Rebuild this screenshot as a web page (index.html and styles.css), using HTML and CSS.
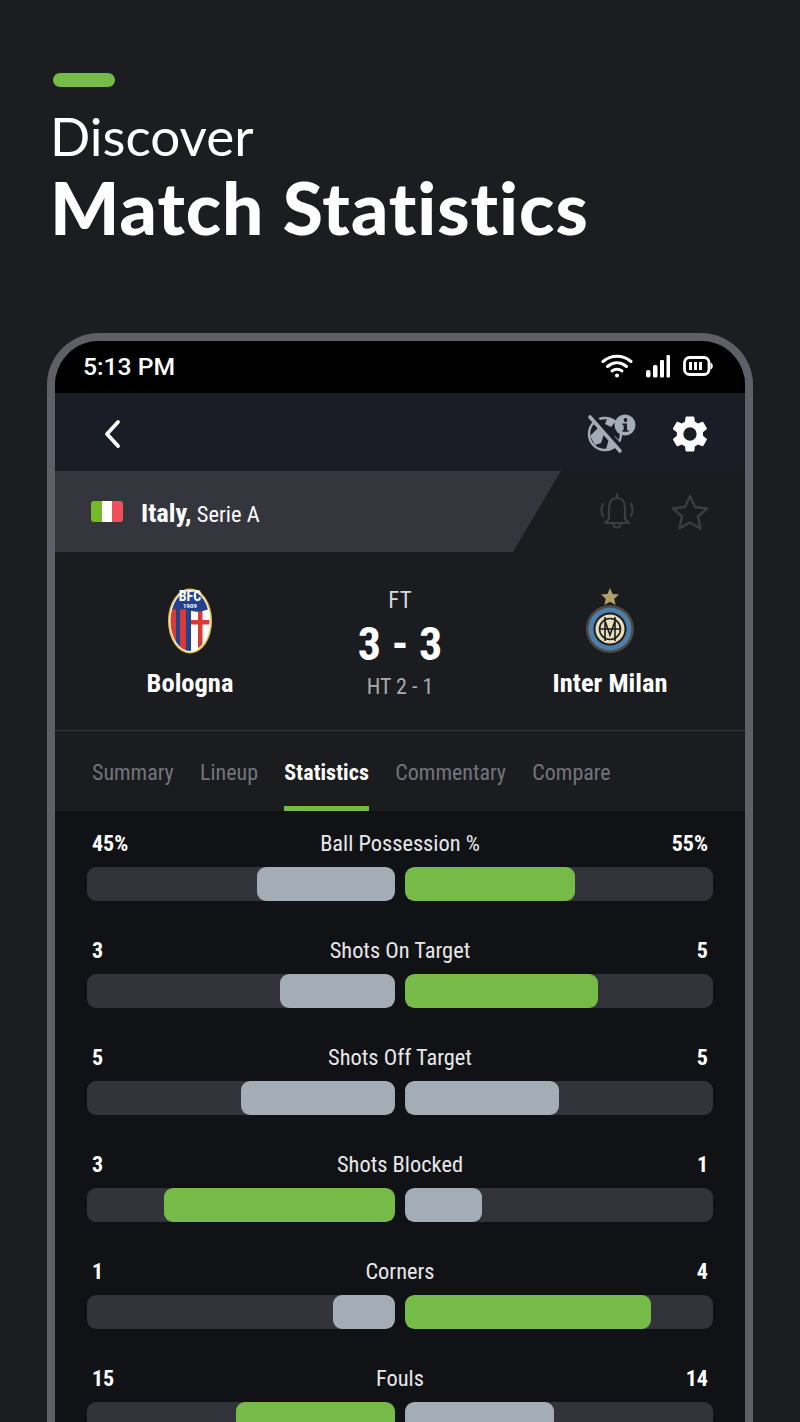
FILE: index.html
```html
<!DOCTYPE html>
<html lang="en">
<head>
<meta charset="utf-8">
<title>Match Statistics</title>
<link rel="stylesheet" href="styles.css">
</head>
<body>
<header class="hero">
  <div class="pill"></div>
  <h1 class="title"><span class="t-light">Discover</span><span class="t-bold">Match Statistics</span></h1>
</header>
<main class="phone">
  <div class="status">
    <span class="time">5:13 PM</span>
    <div class="status-icons">
      <svg width="32" height="26" viewBox="0 0 32 26" fill="none" stroke="#fff" stroke-width="3" stroke-linecap="round"><path d="M2 8.500C10 1.500 22 1.500 30 8.500"/><path d="M6.500 13.500C12.500 8.500 19.500 8.500 25.500 13.500"/><path d="M11 18C14.500 15.500 17.500 15.500 21 18"/><circle cx="16" cy="22.500" r="2" fill="#fff" stroke="none"/></svg>
      <svg width="26" height="26" viewBox="0 0 26 26" fill="#fff"><rect x="1" y="17" width="4.500" height="7.500" rx="2"/><rect x="8" y="12" width="4.500" height="12.500" rx="1.500"/><rect x="15" y="7" width="4" height="17.500" rx="1"/><rect x="21.500" y="2" width="3.500" height="22.500" rx="1"/></svg>
      <svg width="30" height="22" viewBox="0 0 30 22" fill="none"><rect x="1.500" y="2.500" width="24.500" height="17" rx="5" stroke="#fff" stroke-width="2.800"/><path d="M27.500 7.500v7c1.500-.5 2.300-2 2.300-3.500s-.8-3-2.300-3.500z" fill="#fff"/><path d="M7.500 7v8M12.500 7v8M17.500 7v8" stroke="#fff" stroke-width="3"/></svg>
    </div>
  </div>
  <div class="appbar">
    <svg class="back" width="20" height="32" viewBox="0 0 20 32" fill="none" stroke="#fff" stroke-width="3.800" stroke-linecap="round" stroke-linejoin="round"><path d="M16 4L5 16l11 12"/></svg>
    <div class="app-actions">
      <svg width="52" height="42" viewBox="0 0 52 42"><circle cx="20" cy="22" r="16" fill="none" stroke="#a4adb6" stroke-width="2.400"/><path d="M5 24l8-8 6 6-3 9-6 2zM21 37l3-10 6-3 4 4-5 8zM22 7l9 2-5 6-6-3z" fill="#a4adb6"/><path d="M7 4l30 34" stroke="#1a1d26" stroke-width="7"/><path d="M5 5l30 34" stroke="#a4adb6" stroke-width="3.600" stroke-linecap="round"/><circle cx="40" cy="13" r="10.500" fill="#a4adb6"/><circle cx="40.500" cy="8" r="1.900" fill="#1a1d26"/><path d="M37.500 11.500h4.500v6.500h1.500v1.800h-6V18h1.200v-4.700h-1.200z" fill="#1a1d26"/></svg>
      <svg width="42" height="42" viewBox="0 0 24 24" fill="#fff"><path fill-rule="evenodd" d="M19.400 13c.04-.32.07-.65.07-1s-.03-.68-.07-1l2.100-1.650c.2-.15.25-.43.12-.66l-2-3.460c-.12-.22-.4-.3-.61-.22l-2.490 1c-.52-.4-1.080-.73-1.690-.98l-.38-2.650A.49.49 0 0 0 13.970 2h-4a.49.49 0 0 0-.49.42L9.100 5.070c-.61.25-1.170.59-1.690.98l-2.490-1c-.23-.09-.49 0-.61.22l-2 3.460c-.13.22-.07.5.12.66L4.540 11c-.04.32-.07.66-.07 1s.03.68.07 1l-2.110 1.650c-.19.15-.25.430-.12.660l2 3.460c.12.220.39.300.61.220l2.490-1c.52.400 1.080.730 1.690.980l.38 2.650c.03.240.240.420.490.420h4c.250 0 .460-.180.490-.420l.38-2.650c.610-.250 1.170-.590 1.690-.980l2.490 1c.230.090.490 0 .610-.220l2-3.460c.120-.220.070-.500-.120-.660zM12 15.800a3.800 3.800 0 1 1 0-7.600 3.800 3.800 0 0 1 0 7.600z"/></svg>
    </div>
  </div>
  <div class="league">
    <div class="league-tag">
      <span class="flag"><i class="fg"></i><i class="fw"></i><i class="fr"></i></span>
      <span class="league-name"><b>Italy,</b> Serie A</span>
    </div>
    <div class="league-actions">
      <svg width="38" height="40" viewBox="0 0 38 40" fill="none" stroke="#3c3d43" stroke-width="2.200" stroke-linecap="round" stroke-linejoin="round"><path d="M19 2v4M11 27V16c0-6 3-10 8-10s8 4 8 10v11l4 4H7z"/><path d="M15 31c0 6 8 6 8 0M5 12c-2 4-2 8 0 12M33 12c2 4 2 8 0 12"/></svg>
      <svg width="38" height="38" viewBox="0 0 38 38" fill="none" stroke="#3c3d43" stroke-width="2.400" stroke-linejoin="round"><path d="M19 3l5 11 12 1.500-9 8 2.500 12L19 29.500 8.500 35.500 11 23.500l-9-8L14 14z"/></svg>
    </div>
  </div>
  <section class="match">
    <div class="team">
      <svg class="crest" width="46" height="68" viewBox="0 0 46 68">
        <defs><clipPath id="oval"><ellipse cx="23" cy="34" rx="19.500" ry="30"/></clipPath></defs>
        <ellipse cx="23" cy="34" rx="22" ry="32.500" fill="#e8c04a"/>
        <ellipse cx="23" cy="34" rx="20.500" ry="31" fill="#fff"/>
        <g clip-path="url(#oval)">
          <rect x="0" y="0" width="46" height="68" fill="#fff"/>
          <rect x="3" y="22" width="6" height="44" fill="#d63c33"/><rect x="9" y="22" width="4" height="44" fill="#24418e"/>
          <rect x="13" y="22" width="6" height="44" fill="#d63c33"/><rect x="19" y="22" width="5" height="44" fill="#24418e"/>
          <rect x="31" y="18" width="4.500" height="48" fill="#d63c33"/><rect x="24" y="33" width="22" height="4.500" fill="#d63c33"/>
          <path d="M0 0h46v20c-6 3-14 6-21 4-8-2-16-3-25-1z" fill="#24418e"/>
        </g>
        <text x="23" y="14" class="crest-a">BFC</text>
        <text x="23" y="21" class="crest-b">1909</text>
      </svg>
      <span class="team-name">Bologna</span>
    </div>
    <div class="score">
      <span class="ft">FT</span>
      <span class="result">3 - 3</span>
      <span class="ht">HT 2 - 1</span>
    </div>
    <div class="team">
      <svg class="crest" width="52" height="68" viewBox="0 0 52 68">
        <path d="M26 1l2.600 6 6.400.6-4.800 4.200 1.400 6.300L26 14.800l-5.600 3.300 1.400-6.300L17 7.600l6.400-.6z" fill="#b2a06a"/>
        <circle cx="26" cy="42" r="24" fill="#4b4a44"/>
        <circle cx="26" cy="42" r="21.500" fill="#4f7ea8"/>
        <circle cx="26" cy="42" r="16.500" fill="#1b1c20"/>
        <circle cx="26" cy="42" r="14.500" fill="#e9dfbb"/>
        <g fill="none" stroke="#1b1c20" stroke-width="1.600"><circle cx="26" cy="42" r="10.500"/><path d="M21 30v24M31 30v24M21 34l5 14 5-14M16 42h20"/></g>
      </svg>
      <span class="team-name">Inter Milan</span>
    </div>
  </section>
  <nav class="tabs">
    <span class="tab">Summary</span>
    <span class="tab">Lineup</span>
    <span class="tab active">Statistics</span>
    <span class="tab">Commentary</span>
    <span class="tab">Compare</span>
  </nav>
  <section class="stats">
    <div class="stat">
      <div class="stat-head"><b>45%</b><span>Ball Possession %</span><b>55%</b></div>
      <div class="bars"><div class="track left"><div class="fill grey" style="width:44.8%"></div></div><div class="track"><div class="fill green" style="width:55.2%"></div></div></div>
    </div>
    <div class="stat">
      <div class="stat-head"><b>3</b><span>Shots On Target</span><b>5</b></div>
      <div class="bars"><div class="track left"><div class="fill grey" style="width:37.5%"></div></div><div class="track"><div class="fill green" style="width:62.500%"></div></div></div>
    </div>
    <div class="stat">
      <div class="stat-head"><b>5</b><span>Shots Off Target</span><b>5</b></div>
      <div class="bars"><div class="track left"><div class="fill grey" style="width:50%"></div></div><div class="track"><div class="fill grey" style="width:50%"></div></div></div>
    </div>
    <div class="stat">
      <div class="stat-head"><b>3</b><span>Shots Blocked</span><b>1</b></div>
      <div class="bars"><div class="track left"><div class="fill green" style="width:75%"></div></div><div class="track"><div class="fill grey" style="width:25%"></div></div></div>
    </div>
    <div class="stat">
      <div class="stat-head"><b>1</b><span>Corners</span><b>4</b></div>
      <div class="bars"><div class="track left"><div class="fill grey" style="width:20%"></div></div><div class="track"><div class="fill green" style="width:80%"></div></div></div>
    </div>
    <div class="stat">
      <div class="stat-head"><b>15</b><span>Fouls</span><b>14</b></div>
      <div class="bars"><div class="track left"><div class="fill green" style="width:51.700%"></div></div><div class="track"><div class="fill grey" style="width:48.300%"></div></div></div>
    </div>
  </section>
</main>
</body>
</html>
```
FILE: styles.css
```css
* { box-sizing: border-box; }
html, body { margin: 0; height: 1422px; overflow: hidden; }
body { background: #1c1d21; font-family: "Roboto Condensed", "Roboto", sans-serif; font-stretch: 75%; color: #fff; }

.hero { padding: 73px 0 0 53px; height: 333px; }
.pill { width: 62px; height: 14px; border-radius: 7px; background: #76bb47; }
.title { margin: 17px 0 0 -3px; font-family: "Lato", sans-serif; font-stretch: normal; display: flex; flex-direction: column; font-variant-ligatures: none; }
.t-light { font-weight: 400; font-size: 53px; line-height: 64px; }
.t-bold { font-weight: 900; font-size: 73px; line-height: 78px; letter-spacing: 1px; }

.phone { margin-left: 47px; width: 706px; height: 1100px; border: 8px solid #5f6067; border-bottom: 0; border-radius: 52px 52px 0 0; background: #1b1c20; overflow: hidden; }

.status { height: 52px; background: #000; display: flex; align-items: center; justify-content: space-between; padding: 0 32px 0 28px; }
.time { font-family: "Roboto", sans-serif; font-stretch: normal; font-size: 24.700px; font-weight: 500; margin-top: -1px; }
.status-icons { display: flex; align-items: center; gap: 12px; margin-top: -2px; }

.appbar { height: 78px; background: #1a1d26; display: flex; align-items: center; justify-content: space-between; padding: 3px 34px 0 47px; }
.app-actions { display: flex; align-items: center; gap: 32px; }
.app-actions svg:first-child { margin-top: -2px; }

.league { height: 81px; display: flex; justify-content: space-between; align-items: center; padding-right: 36px; }
.league-tag { width: 506px; height: 81px; background: #35363d; clip-path: polygon(0 0, 100% 0, 90.500% 100%, 0 100%); display: flex; align-items: center; gap: 18px; padding-left: 36px; }
.flag { display: flex; width: 32px; height: 21px; border-radius: 3px; overflow: hidden; margin-top: -1px; }
.flag i { flex: 1; }
.fg { background: #76b82a; } .fw { background: #fff; } .fr { background: #ef4f5b; }
.league-name { font-size: 22.500px; padding-top: 2px; }
.league-name b { font-size: 26.500px; }
.league-actions { display: flex; gap: 35px; align-items: center; }

.match { height: 179px; border-bottom: 1px solid #35363d; display: grid; grid-template-columns: 270px 150px 270px; padding-top: 35px; }
.team { display: flex; flex-direction: column; align-items: center; }
.crest { display: block; height: 68px; }
.crest-a { font: 700 14px "Roboto Condensed", "Roboto", sans-serif; fill: #fff; text-anchor: middle; }
.crest-b { font: 700 6px "Roboto", sans-serif; fill: #fff; text-anchor: middle; }
.team-name { font-weight: 700; font-size: 26.500px; line-height: 30px; margin-top: 13px; }
.score { display: flex; flex-direction: column; align-items: center; padding-top: 1px; }
.ft { font-size: 23px; line-height: 26px; color: #d8d9dc; }
.result { font-size: 46px; line-height: 60px; font-weight: 700; }
.ht { font-size: 22px; line-height: 26px; color: #a9abb0; }

.tabs { height: 80px; display: flex; gap: 26.300px; padding-left: 37px; align-items: stretch; font-size: 22px; }
.tab { color: #74757b; display: flex; align-items: center; border-bottom: 5px solid transparent; padding-top: 7px; }
.tab.active { color: #fff; font-weight: 700; letter-spacing: .1px; border-bottom-color: #76bb47; }

.stats { background: #111216; padding: 20px 32px 0; display: flex; flex-direction: column; gap: 37px; }
.stat { flex: none; height: 70px; }
.stat-head { display: flex; justify-content: space-between; align-items: center; height: 26px; padding: 0 5px 2px; font-size: 22.400px; color: #e8e8ea; margin-bottom: 10px; }
.stat-head b { color: #fff; font-size: 22px; }
.bars { display: flex; gap: 10px; }
.track { flex: 1; height: 34px; border-radius: 9px; background: #33343b; overflow: hidden; display: flex; }
.track.left { justify-content: flex-end; }
.fill { height: 100%; border-radius: 9px; }
.grey { background: #a4adb6; }
.green { background: #76bb47; }
```
